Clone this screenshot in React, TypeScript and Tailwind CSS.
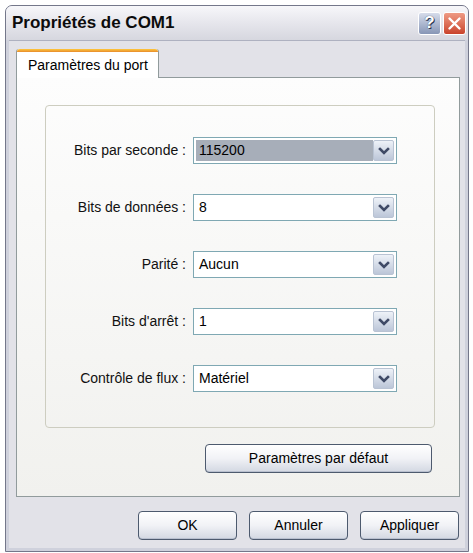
import React from 'react';

const font = { fontFamily: '"Liberation Sans", Arial, sans-serif' };

function Chevron() {
  return (
    <svg width="12" height="10" viewBox="0 0 12 10">
      <path d="M2 3 L6 7 L10 3" fill="none" stroke="#3f4a66" strokeWidth="2.6" strokeLinecap="square" />
    </svg>
  );
}

function Combo({ value, selected }: { value: string; selected?: boolean }) {
  return (
    <div className="flex h-[27px] w-[204px] border border-[#7fa8b3] bg-white p-[2px]">
      <div
        className={
          'flex flex-1 items-center pl-[3px] text-[14px] text-black ' +
          (selected ? 'bg-[#a7aeb9]' : 'bg-white')
        }
      >
        {value}
      </div>
      <div className="flex w-[21px] items-center justify-center rounded-[2px] border border-[#b9c3d3] bg-gradient-to-b from-[#eef2f8] to-[#bcc6d8]">
        <Chevron />
      </div>
    </div>
  );
}

function XpButton({ children, className = '' }: { children: React.ReactNode; className?: string }) {
  return (
    <button
      className={
        'flex h-[29px] items-center justify-center rounded-[4px] border border-[#4d5a6e] bg-gradient-to-b from-[#ffffff] via-[#f1f2f6] to-[#d3d8e2] text-[14px] text-black shadow-[inset_0_-1px_0_#b9c0cf] ' +
        className
      }
    >
      {children}
    </button>
  );
}

const rows: { label: string; value: string; selected?: boolean }[] = [
  { label: 'Bits par seconde :', value: '115200', selected: true },
  { label: 'Bits de données :', value: '8' },
  { label: 'Parité :', value: 'Aucun' },
  { label: "Bits d'arrêt :", value: '1' },
  { label: 'Contrôle de flux :', value: 'Matériel' },
];

export default function App() {
  return (
    <div className="h-[553px] w-[473px] bg-white pl-[5px] pt-[5px]" style={font}>
      <div className="flex h-[547px] w-[464px] flex-col rounded-t-[7px] border border-[#74778a] bg-[#cfd1dc]">
        {/* Title bar */}
        <div className="flex h-[34px] items-center justify-between rounded-t-[6px] bg-gradient-to-b from-[#f7f7fa] via-[#e6e6ec] to-[#d6d7df] pl-[6px] pr-[2px]">
          <span className="text-[17px] font-bold text-[#0c0c0c]">Propriétés de COM1</span>
          <div className="flex gap-[2px]">
            <div className="flex h-[23px] w-[23px] items-center justify-center rounded-[3px] border border-white bg-gradient-to-b from-[#d6dcea] to-[#8796b6] text-[17px] font-bold text-white [text-shadow:0_0_1px_#2a3550,1px_1px_0_#2a3550]">
              ?
            </div>
            <div className="flex h-[23px] w-[23px] items-center justify-center rounded-[3px] border border-white bg-gradient-to-b from-[#ee9a84] to-[#c9422b]">
              <svg width="15" height="15" viewBox="0 0 15 15">
                <path d="M2.5 2.5 L12.5 12.5 M12.5 2.5 L2.5 12.5" stroke="#ffffff" strokeWidth="2.4" strokeLinecap="round" />
              </svg>
            </div>
          </div>
        </div>

        {/* Client area */}
        <div className="mx-[3px] mb-[3px] flex flex-1 flex-col border-t border-[#aeb1c0] bg-[#e2e2e8] pl-[7px] pr-[5px] pt-[8px]">
          {/* Tab */}
          <div className="relative z-10 -mb-px flex h-[29px] w-[143px] flex-col rounded-t-[3px] border-x border-[#919b9c] bg-white">
            <div className="h-[3px] rounded-t-[3px] bg-gradient-to-b from-[#ffc83c] to-[#e68b2c]" />
            <div className="flex flex-1 items-center pl-[11px] text-[14px] text-black">Paramètres du port</div>
          </div>

          {/* Panel */}
          <div className="flex h-[420px] flex-col border border-[#919b9c] bg-gradient-to-b from-[#fdfdfd] to-[#f1f1ee] pr-[24px] pl-[28px] pt-[27px]">
            <div className="grid h-[323px] grid-cols-[140px_204px] content-start items-center gap-x-[7px] gap-y-[30px] rounded-[4px] border border-[#cdcdc0] pt-[31px]">
              {rows.map((r) => (
                <React.Fragment key={r.label}>
                  <span className="text-right text-[14px] text-[#111]">{r.label}</span>
                  <Combo value={r.value} selected={r.selected} />
                </React.Fragment>
              ))}
            </div>
            <div className="mt-[16px] flex justify-end pr-[3px]">
              <XpButton className="w-[227px]">Paramètres par défaut</XpButton>
            </div>
          </div>

          {/* Dialog buttons */}
          <div className="mt-[14px] flex justify-end gap-[12px] pr-[1px]">
            <XpButton className="w-[99px]">OK</XpButton>
            <XpButton className="w-[99px]">Annuler</XpButton>
            <XpButton className="w-[99px]">Appliquer</XpButton>
          </div>
        </div>
      </div>
    </div>
  );
}
